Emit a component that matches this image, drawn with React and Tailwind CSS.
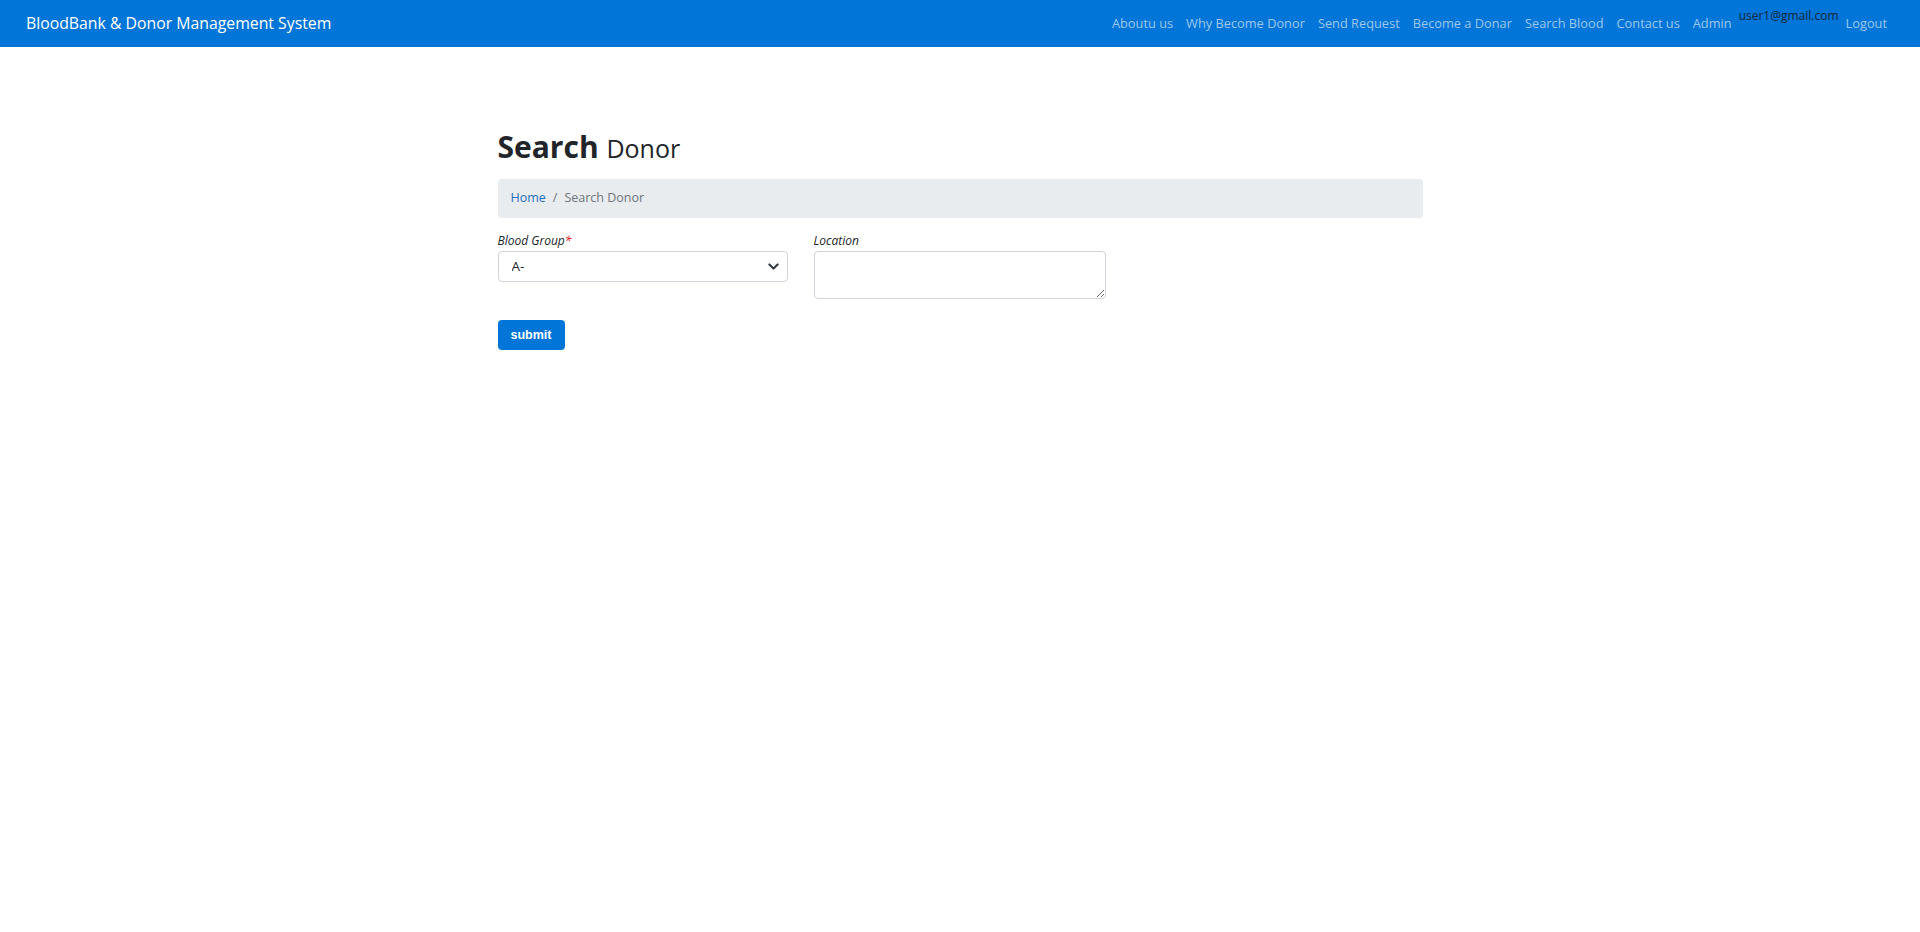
import { useState } from "react"

const links = ["Aboutu us", "Why Become Donor", "Send Request", "Become a Donar", "Search Blood", "Contact us", "Admin"]

function Navbar() {
    return <nav className="flex items-center h-[47px] bg-[#0275d8] pl-[26px] pr-[33px]">
        <a href="#" className="text-white text-[15.8px]">BloodBank &amp; Donor Management System</a>
        <div className="ml-auto flex items-center text-[12.8px]">
            {links.map((l, i) => <a key={l} href="#" className={(i > 0 ? "ml-[13px] " : "") + "text-[#9fc7ee] leading-[47px]"}>{l}</a>)}
            <span className="ml-[7px] text-[12px] text-[#16263d] self-start mt-[7px] leading-[18px]">user1@gmail.com</span>
            <a href="#" className="ml-[7px] text-[#9fc7ee] leading-[47px]">Logout</a>
        </div>
    </nav>
}

export default function App() {
    const [group, setGroup] = useState("A-")
    return <div className="min-h-screen bg-white text-[#212529]" style={{ fontFamily: "'Open Sans', 'Noto Sans', sans-serif" }}>
        <Navbar />
        <div className="w-[925px] mx-auto pt-[81px]">
            <h1 className="text-[30px] font-bold leading-[38px] mb-[12px]">
                Search <span className="text-[25px] font-normal">Donor</span>
            </h1>
            <div className="h-[39px] flex items-center px-[13px] bg-[#e9ecef] rounded-[4px] text-[12.5px]">
                <a href="#" className="text-[#1c6fc2]">Home</a>
                <span className="px-[7px] text-[#6c757d]">/</span>
                <span className="text-[#6c757d]">Search Donor</span>
            </div>
            <form className="mt-[13px]" onSubmit={(e) => e.preventDefault()}>
                <div className="flex gap-[26px] items-start">
                    <div className="w-[290px]">
                        <label className="block italic text-[12px] leading-[19px] mb-[1px]">Blood Group<span className="text-red-600">*</span></label>
                        <div className="relative">
                            <select value={group} onChange={(e) => setGroup(e.target.value)} className="w-full h-[31px] appearance-none border border-[#ced4da] rounded-[4px] pl-[13px] pr-8 text-[13.5px] text-[#212529] bg-white outline-none">
                                {["A+", "A-", "B+", "B-", "AB+", "AB-", "O+", "O-"].map(g => <option key={g}>{g}</option>)}
                            </select>
                            <svg className="absolute right-[9px] top-[10px] pointer-events-none" width="11" height="11" viewBox="0 0 16 16">
                                <path d="m2 5 6 6 6-6" fill="none" stroke="#343a40" strokeWidth="3" strokeLinecap="round" strokeLinejoin="round" />
                            </svg>
                        </div>
                    </div>
                    <div className="w-[292px]">
                        <label className="block italic text-[12px] leading-[19px] mb-[1px]">Location</label>
                        <textarea className="block w-full h-[48px] border border-[#ced4da] rounded-[4px] px-[10px] py-[5px] text-[13px] outline-none"></textarea>
                    </div>
                </div>
                <button type="submit" className="mt-[21px] h-[30px] w-[67px] bg-[#0275d8] text-white font-bold text-[12.5px] rounded-[4px]" style={{ fontFamily: "'Liberation Sans', Arial, sans-serif" }}>submit</button>
            </form>
        </div>
    </div>
}
